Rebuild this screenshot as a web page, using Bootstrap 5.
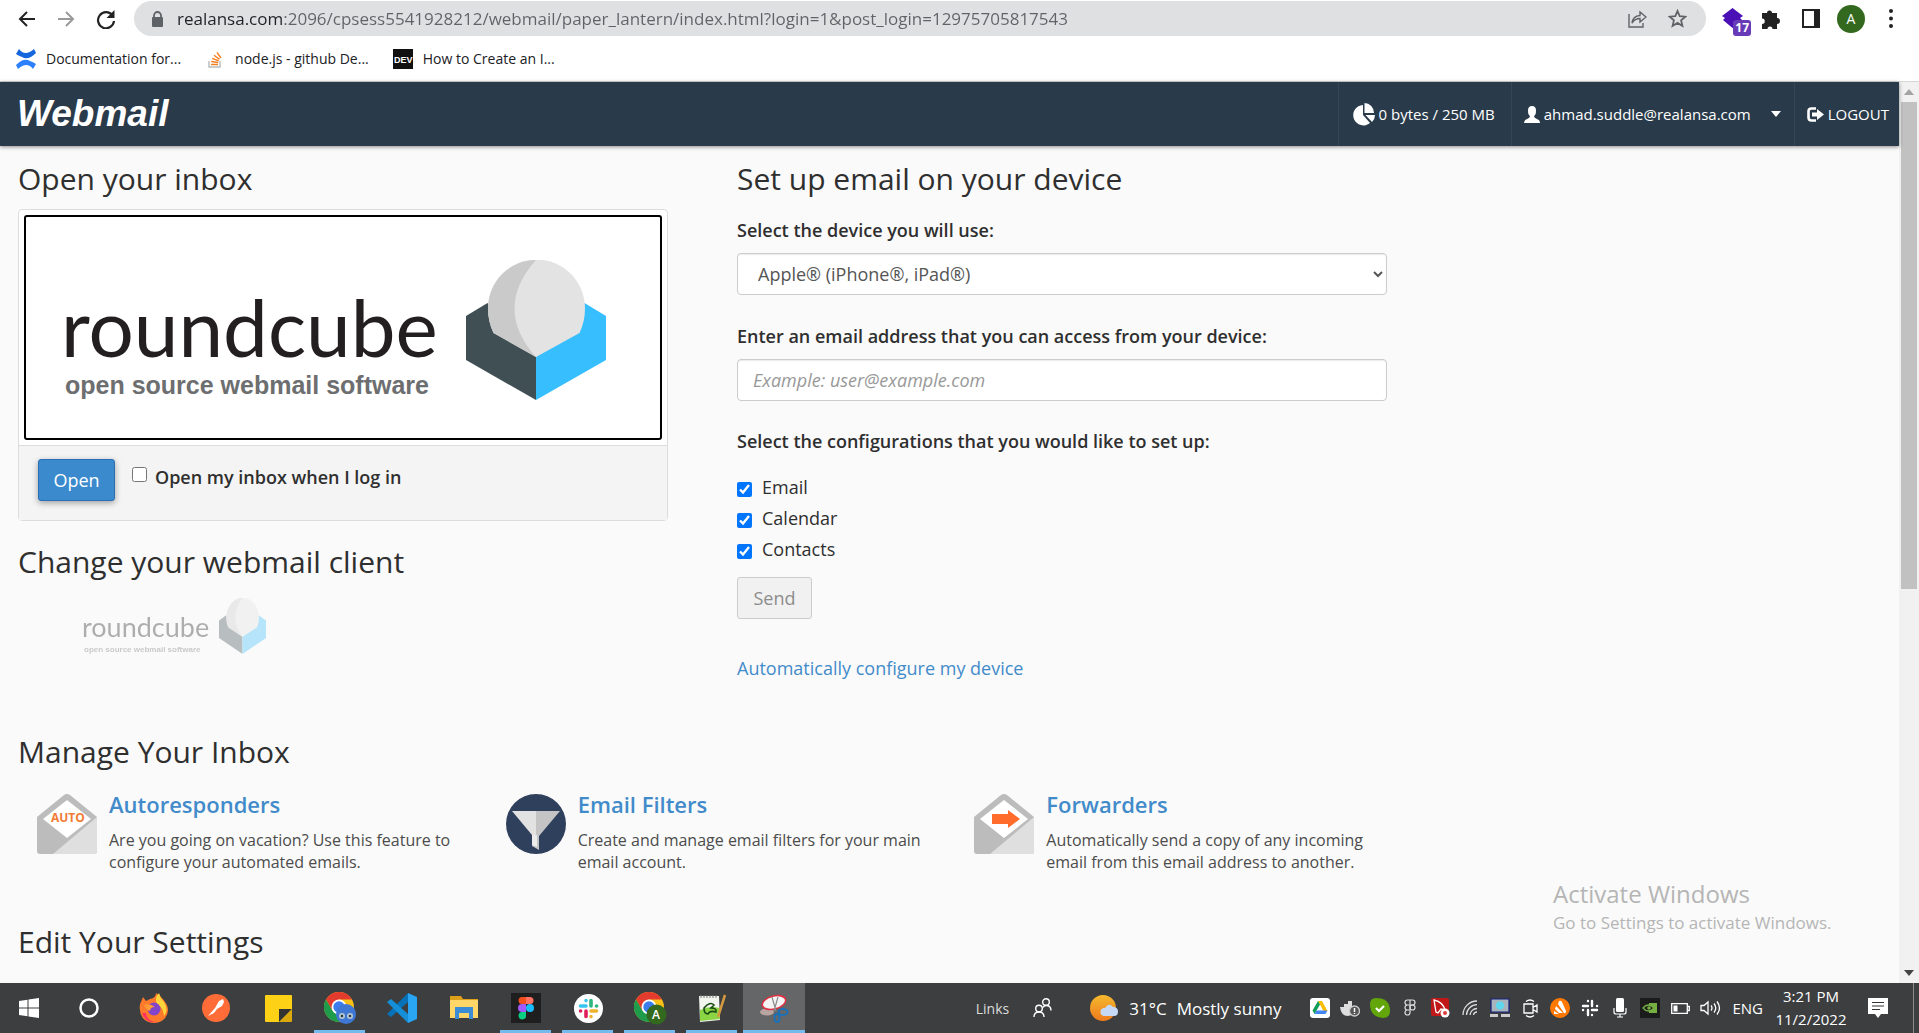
<!DOCTYPE html>
<html lang="en">
<head>
<meta charset="utf-8">
<meta name="viewport" content="width=device-width, initial-scale=1">
<title>Webmail</title>
<link href="https://cdn.jsdelivr.net/npm/bootstrap@5.3.0/dist/css/bootstrap.min.css" rel="stylesheet">
<style>
  body { font-family: "Open Sans", "Noto Sans", sans-serif; font-size: 18px; line-height: 27px; color: #2f2f2f; background: #fff; }
  svg { display: block; flex: none; }
  .toolbar { height: 36px; padding: 1px 8px 0 16px; }
  .tool-btn { border: 0; background: none; padding: 0; display: flex; align-items: center; justify-content: center; width: 40px; height: 35px; flex: none; }
  .tool-btn.slim { width: 22px; }
  .tool-btn.ext { width: 37px; }
  .omnibox { background: #dfe0e2; height: 35px; border-radius: 18px; margin-left: 8px; padding: 0 9px 0 18px; }
  /* host part of the address is darker than the rest */
  .omnibox input { border: 0; outline: 0; font-size: 17px; padding: 0; margin-left: 14px; min-width: 0; color: transparent; background: linear-gradient(to right, #202124 106px, #5f6368 106px); -webkit-background-clip: text; background-clip: text; }
  .avatar { width: 28px; height: 28px; border-radius: 50%; background: #33691e; color: #fff; font-size: 14px; line-height: 28px; }
  .ext-count { right: 0; bottom: 0; background: #673ab7; color: #fff; font-size: 12px; font-weight: 700; line-height: 16px; padding: 0 2px; border-radius: 3px; }
  .bookmarks { height: 45px; padding: 0 16px; font-size: 14px; gap: 24px; }
  .bookmarks a { color: #202124; text-decoration: none; gap: 10px; }
  .viewport-area { border-top: 1px solid #d5d6d8; min-height: 0; }
  .page-col { min-width: 0; }
  .mail-head { background: #293a4a; height: 64px; flex: none; padding-left: 17px; box-shadow: 0 1px 4px rgba(0,0,0,.45); position: relative; }
  .brand-name { font: italic 700 37px "Liberation Sans", sans-serif; color: #fff; text-decoration: none; }
  .head-item { height: 64px; border: solid #32475a; border-width: 0 0 0 1px; color: #fff; font-size: 15px; text-decoration: none; background: none; gap: 4px; white-space: nowrap; padding: 0 16px 0 14px; }
  .head-item.user { padding: 0 13px 0 12px; }
  .head-item.leave { padding: 0 10px 0 12px; }
  .mail-body { background: #fafafa; overflow: hidden; padding: 15px 18px 0; }
  .section-title { font-size: 30px; line-height: 36px; font-weight: 400; margin: 0; }
  .section-title.form-title { margin-bottom: 20px; }
  .section-title.group-title { margin-top: 52px; }
  .setup-grid { display: grid; grid-template-columns: 1fr 1fr; column-gap: 69px; max-width: 1369px; }
  .client-panel { margin-top: 12px; border: 1px solid #ddd; border-radius: 4px; background: #fff; margin-bottom: 23px; }
  .client-frame { display: block; margin: 5px 5px 5px; border: 2px solid #000; border-radius: 3px; }
  .client-frame svg { width: 100%; height: auto; }
  .panel-foot { background: #f4f4f4; border-top: 1px solid #ddd; height: 75px; padding: 13px 19px; }
  .open-btn { width: 77px; height: 42px; background: #3a8acd; border: 1px solid #2b6fb4; border-radius: 3px; color: #fff; padding: 0; font-size: 18px; box-shadow: 0 2px 6px rgba(0,0,0,.35); }
  .auto-open { padding-left: 17px; }
  .auto-open label { padding-top: 5px; }
  .tick { width: 15px; height: 15px; margin: 0; flex: none; accent-color: #0075ff; }
  .small-logo { margin: 3px 0 0 52px; opacity: .35; display: block; width: 216px; }
  .field-label { font-weight: 600; display: block; margin-bottom: 9px; }
  .field-box { display: block; width: 100%; height: 42px; border: 1px solid #ccc; border-radius: 4px; background: #fff; color: #555; font-size: 18px; box-shadow: inset 0 1px 1px rgba(0,0,0,.08); margin-bottom: 28px; padding: 0 15px; }
  select.field-box { padding: 0 2px 0 16px; }
  .field-box::placeholder { color: #999; font-style: italic; opacity: 1; }
  .config-title { margin-bottom: 17px; }
  input.field-box { margin-bottom: 27px; }
  .config-row { height: 31px; gap: 10px; }
  .config-row .tick { margin-top: 4px; }
  .send-btn { height: 42px; width: 75px; margin-top: 12px; border: 1px solid #ccc; border-radius: 3px; background: #f1f1f1; color: #8c8c8c; padding: 0; font-size: 18px; }
  .mail-body a.plain { color: #428bca; text-decoration: none; }
  .auto-link { display: block; margin-top: 36px; }
  .tiles { max-width: 1406px; margin-bottom: 51px; }
  .tile { padding: 21px 20px 0 19px; gap: 12px; }
  .tile > svg { margin-top: 3px; }
  .tile h3 { font-size: 22px; line-height: 27px; font-weight: 600; margin: 0 0 11px; }
  .tile p { font-size: 16px; line-height: 22px; margin: 0; color: #4c4c4c; }
  .scroller { width: 20px; background: #f1f1f1; flex: none; padding: 0 2px; }
  .thumb { background: #c1c1c1; height: 487px; }
  .arrow-cell { height: 20px; display: flex; align-items: center; justify-content: center; flex: none; }
  .activate { right: 60px; bottom: 46px; color: #b5b5b5; font-size: 17px; line-height: 28px; width: 306px; pointer-events: none; white-space: nowrap; }
  .activate strong { font-weight: 400; font-size: 24px; line-height: 31px; display: block; }
  .taskbar { height: 50px; background: #3c3e40; color: #fff; flex: none; font-family: "Open Sans", sans-serif; font-size: 15px; }
  .task { width: 62px; height: 50px; border: 0; background: none; padding: 0; display: flex; align-items: center; justify-content: center; position: relative; flex: none; }
  .task.start { width: 58px; }
  .task.search { margin-right: 3px; }
  .task.notes { width: 50px; margin-right: 10px; }
  .task.opened::after { content: ""; position: absolute; left: 5px; right: 6px; bottom: 0; height: 3px; background: #76b9ed; }
  .task.current { background: #656668; }
  .task.current::after { left: 0; right: 0; }
  .tray { width: 30px; height: 50px; border: 0; background: none; padding: 0; display: flex; align-items: center; justify-content: center; flex: none; }
  .links-label { font-size: 14px; color: #dcdcdc; }
  .people { margin-right: 38px; }
  .weather { font-size: 17px; gap: 10px; margin-right: 24px; }
  .lang { margin: 0 6px 0 7px; }
  .clock { line-height: 23px; width: 84px; }
  .desk-edge { border-left: 1px solid #8a8b8c; width: 6px; }
</style>
</head>
<body class="vh-100 overflow-hidden d-flex flex-column">

<svg class="d-none" aria-hidden="true">
  <symbol id="cube" viewBox="0 0 140 140" preserveAspectRatio="none">
    <path d="M0 56 21.500 43l48.500 54v43L0 100z" fill="#404f54"/>
    <path d="M140 56 118.500 43 70 97v43l70-40z" fill="#37beff"/>
    <path d="M22 48.500a48 48.500 0 0 1 97 0q0 13-5.500 24.500L70 97 27.500 73Q22 61.500 22 48.500z" fill="#e3e3e3"/>
    <path d="M70 0a48 48.500 0 0 0-48 48.500q0 13 5.500 24.500L70 97Q48.500 73 48.500 48.500T70 0z" fill="#cacaca"/>
  </symbol>
  <symbol id="env" viewBox="0 0 60 60">
    <path d="M0 23 27 1q3-2 6 0l27 22v34q0 3-3 3H3q-3 0-3-3z" fill="#bcbcbc"/>
    <path d="M60 23 16 60h41q3 0 3-3z" fill="#dfdfdf"/>
    <path d="M6 25 30 6l24 19-24 19z" fill="#fff"/>
  </symbol>
  <symbol id="chrome" viewBox="0 0 30 30">
    <circle cx="15" cy="15" r="15" fill="#fbc116"/>
    <path d="M2 7.500A15 15 0 0 1 28 7.500H15L8.500 18.700z" fill="#e33b2e"/>
    <path d="M2 7.500A15 15 0 0 0 15 30l6.500-11.200H8.500z" fill="#1e9b4b"/>
    <circle cx="15" cy="15" r="7.500" fill="#fff"/><circle cx="15" cy="15" r="5.700" fill="#3b7ded"/>
  </symbol>
</svg>

<header class="bg-white">
  <div class="toolbar d-flex align-items-center">
    <button class="tool-btn slim" aria-label="Back"><svg width="18" height="18" viewBox="0 0 18 18" fill="none" stroke="#222" stroke-width="2"><path d="M17 9H2M9 2 2 9l7 7"/></svg></button>
    <button class="tool-btn ms-2" aria-label="Forward"><svg width="18" height="18" viewBox="0 0 18 18" fill="none" stroke="#9a9a9a" stroke-width="2"><path d="M1 9h15M9 2l7 7-7 7"/></svg></button>
    <button class="tool-btn" aria-label="Reload"><svg width="20" height="20" viewBox="0 0 20 20"><path d="M16.500 6.500A8 8 0 1 0 18 12" fill="none" stroke="#222" stroke-width="2.200"/><path d="M18.500 1v8h-8z" fill="#222"/></svg></button>
    <div class="omnibox flex-grow-1 d-flex align-items-center">
      <svg width="11" height="16" viewBox="0 0 11 16"><path d="M2 7V4.500a3.500 3.500 0 0 1 7 0V7" fill="none" stroke="#5f6368" stroke-width="1.800"/><rect y="6" width="11" height="10" rx="1" fill="#5f6368"/></svg>
      <input class="flex-grow-1" type="text" aria-label="Address" value="realansa.com:2096/cpsess5541928212/webmail/paper_lantern/index.html?login=1&amp;post_login=12975705817543">
      <button class="tool-btn" aria-label="Share"><svg width="19" height="19" viewBox="0 0 19 19" fill="none" stroke="#5f6368" stroke-width="1.400"><path d="M1 5v13h14v-4"/><path d="M4 14q1-7 8-7.500V3l6 5-6 5V9.500Q7 9.500 4 14z"/></svg></button>
      <button class="tool-btn" aria-label="Bookmark"><svg width="19" height="19" viewBox="0 0 19 19" fill="none" stroke="#5f6368" stroke-width="1.800"><path d="m9.500 2 2.200 5.200 5.600.5-4.200 3.700 1.300 5.500-4.900-3-4.900 3 1.300-5.500-4.200-3.700 5.600-.5z"/></svg></button>
    </div>
    <button class="tool-btn ext position-relative ms-2" aria-label="Extension"><svg width="21" height="22" viewBox="0 0 21 22"><path d="M10.500 0 21 8l-3 2 2 2-9.500 8L1 12l2-2-3-2z" fill="#4a10b5"/></svg><span class="ext-count position-absolute">17</span></button>
    <button class="tool-btn" aria-label="Extensions"><svg width="18" height="20" viewBox="0 0 18 20"><path d="M0 4h5a2.500 2.500 0 0 1 5 0h5v5a2.500 2.500 0 0 1 0 6v5h-4.500a2.500 2.500 0 0 0-5 0H0v-5a2.700 2.700 0 0 0 0-5.500z" fill="#222"/></svg></button>
    <button class="tool-btn" aria-label="Side panel"><svg width="18" height="19" viewBox="0 0 18 19"><rect x="1" y="1" width="16" height="17" fill="none" stroke="#222" stroke-width="2"/><path d="M12 1h5v17h-5z" fill="#222"/></svg></button>
    <button class="tool-btn" aria-label="Profile"><span class="avatar">A</span></button>
    <button class="tool-btn" aria-label="Menu"><svg width="4" height="19" viewBox="0 0 4 19" fill="#222"><circle cx="2" cy="2" r="2"/><circle cx="2" cy="9.500" r="2"/><circle cx="2" cy="17" r="2"/></svg></button>
  </div>
  <nav class="bookmarks d-flex align-items-center" aria-label="Bookmarks">
    <a href="#" class="d-flex align-items-center"><svg width="20" height="20" viewBox="0 0 20 20"><path d="M3 0q6 8 15 0l2 4Q12 12 6 8 3 7 0 5z" fill="#1566dd"/><path d="M17 20q-6-8-15 0l-2-4q8-8 14-4 3 1 6 3z" fill="#2c80fb"/></svg>Documentation for...</a>
    <a href="#" class="d-flex align-items-center"><svg width="20" height="20" viewBox="0 0 20 20" fill="none" stroke="#f48024" stroke-width="1.400"><path d="M4 12v6h11v-6" stroke="#bcbbbb"/><path d="M6 15.500h7M6.200 12.500l7 1M7.200 9.300l6.500 2.500M9 6.200l5.500 4.200M12 3.500l4 5.500"/></svg>node.js - github De...</a>
    <a href="#" class="d-flex align-items-center"><svg width="20" height="20" viewBox="0 0 20 20"><path d="M0 0h20v20H0z" fill="#111"/><text x="1" y="14" font-family="Liberation Sans" font-size="9" font-weight="700" fill="#fff">DEV</text></svg>How to Create an I...</a>
  </nav>
</header>

<div class="viewport-area d-flex flex-grow-1 position-relative">
  <div class="page-col flex-grow-1 d-flex flex-column">
    <div class="mail-head d-flex align-items-center">
      <a class="brand-name me-auto" href="#">Webmail</a>
      <span class="head-item d-flex align-items-center"><svg width="22" height="23" viewBox="0 0 22 23" fill="#fff"><path d="M10 2v10l7 8A10.200 10.200 0 1 1 10 2z"/><path d="M11.500 0A10 10 0 0 1 21 10h-9.500zM12.500 12H22q0 4-3 7z"/></svg>0 bytes / 250 MB</span>
      <button class="head-item user d-flex align-items-center"><svg width="16" height="17" viewBox="0 0 16 17" fill="#fff"><path d="M8 0q4 0 4 4.500Q12 9 10 10q0 2 3 3t3 4H0q0-3 3-4t3-3Q4 9 4 4.500 4 0 8 0z"/></svg>ahmad.suddle@realansa.com<svg class="ms-3" width="10" height="6" viewBox="0 0 10 6"><path d="M0 0h10L5 6z" fill="#fff"/></svg></button>
      <a class="head-item leave d-flex align-items-center" href="#"><svg width="17" height="15" viewBox="0 0 17 15"><path d="M9 1.500H4.500Q1.500 1.500 1.500 4.500v6q0 3 3 3H9" fill="none" stroke="#fff" stroke-width="2.600"/><path d="M5 5.500h5V2l7 5.500-7 5.500V9.500H5z" fill="#fff"/></svg>LOGOUT</a>
    </div>
    <main class="mail-body flex-grow-1">
      <div class="setup-grid">
        <section>
          <h2 class="section-title">Open your inbox</h2>
          <div class="client-panel">
            <a class="client-frame" href="#" aria-label="Roundcube">
              <svg viewBox="0 0 634 221">
                <text x="35" y="140" font-family="Lato" font-size="80" fill="#231f20">roundcube</text>
                <text x="39" y="177" font-family="Liberation Sans" font-weight="700" font-size="25" fill="#6d6e70">open source webmail software</text>
                <use href="#cube" x="440" y="43" width="140" height="140"/>
              </svg>
            </a>
            <div class="panel-foot d-flex">
              <button class="open-btn">Open</button>
              <div class="auto-open d-flex">
                <input class="tick mt-2" type="checkbox" id="auto"><label class="fw-semibold ms-2" for="auto">Open my inbox when I log in</label>
              </div>
            </div>
          </div>
          <h2 class="section-title">Change your webmail client</h2>
          <a class="small-logo" href="#" aria-label="Roundcube">
            <svg width="216" height="76">
              <text x="12" y="54" font-family="Lato" font-size="27" fill="#231f20">roundcube</text>
              <text x="14" y="69" font-family="Liberation Sans" font-weight="700" font-size="8" fill="#6d6e70">open source webmail software</text>
              <use href="#cube" x="149" y="15" width="47" height="56"/>
            </svg>
          </a>
        </section>
        <section>
          <h2 class="section-title form-title">Set up email on your device</h2>
          <label class="field-label" for="device">Select the device you will use:</label>
          <select class="field-box" id="device"><option>Apple® (iPhone®, iPad®)</option></select>
          <label class="field-label" for="addr">Enter an email address that you can access from your device:</label>
          <input class="field-box" id="addr" type="email" placeholder="Example: user@example.com">
          <div class="config-title fw-semibold">Select the configurations that you would like to set up:</div>
          <div class="config-row d-flex align-items-center"><input class="tick" type="checkbox" id="c1" checked><label for="c1">Email</label></div>
          <div class="config-row d-flex align-items-center"><input class="tick" type="checkbox" id="c2" checked><label for="c2">Calendar</label></div>
          <div class="config-row d-flex align-items-center"><input class="tick" type="checkbox" id="c3" checked><label for="c3">Contacts</label></div>
          <button class="send-btn" disabled>Send</button>
          <a class="plain auto-link" href="#">Automatically configure my device</a>
        </section>
      </div>
      <h2 class="section-title group-title">Manage Your Inbox</h2>
      <div class="tiles row row-cols-3 g-0">
        <div class="tile d-flex"><svg width="60" height="60"><use href="#env"/><text x="14" y="28" font-family="Open Sans" font-size="12" font-weight="700" fill="#f27b35">AUTO</text></svg><div><h3><a class="plain" href="#">Autoresponders</a></h3><p>Are you going on vacation? Use this feature to configure your automated emails.</p></div></div>
        <div class="tile d-flex"><svg width="60" height="60" viewBox="0 0 60 60"><circle cx="30" cy="30" r="30" fill="#2f405c"/><path d="M6 17h24v27l-4-3z" fill="#e2e2e2"/><path d="M30 17h24L33 42v14l-7-4V41h4z" fill="#c4c4c4"/><path d="M26 41h5v12l-5-2z" fill="#ececec"/></svg><div><h3><a class="plain" href="#">Email Filters</a></h3><p>Create and manage email filters for your main email account.</p></div></div>
        <div class="tile d-flex"><svg width="60" height="60"><use href="#env"/><path d="M18 20h16v-4l12 9-12 9v-4H18z" fill="#ff6c2c"/></svg><div><h3><a class="plain" href="#">Forwarders</a></h3><p>Automatically send a copy of any incoming email from this email address to another.</p></div></div>
      </div>
      <h2 class="section-title">Edit Your Settings</h2>
    </main>
  </div>
  <div class="scroller d-flex flex-column">
    <div class="arrow-cell"><svg width="10" height="6" viewBox="0 0 10 6"><path d="M0 6h10L5 0z" fill="#a3a3a3"/></svg></div>
    <div class="thumb"></div>
    <div class="arrow-cell mt-auto"><svg width="10" height="6" viewBox="0 0 10 6"><path d="M0 0h10L5 6z" fill="#444"/></svg></div>
  </div>
  <div class="activate position-absolute"><strong>Activate Windows</strong>Go to Settings to activate Windows.</div>
</div>

<footer class="taskbar d-flex align-items-center">
  <button class="task start" aria-label="Start"><svg width="20" height="20" viewBox="0 0 20 20" fill="#fff"><path d="M0 3l8.500-1.200v7.700H0zM9.500 1.600 20 0v9.500H9.500zM0 10.500h8.500v7.700L0 17zM9.500 10.500H20V20L9.500 18.400z"/></svg></button>
  <button class="task search" aria-label="Cortana"><svg width="20" height="20" viewBox="0 0 20 20"><circle cx="10" cy="10" r="8.500" fill="none" stroke="#fff" stroke-width="2.500"/></svg></button>
  <button class="task" aria-label="Firefox"><svg width="30" height="30" viewBox="0 0 30 30"><path d="M2 9l2-5 3 4 4-2q6-1 6-6l5 4q7 7 7 13a14 13 0 0 1-28 0q-1-5 1-8z" fill="#ff7a2a"/><path d="M20 0q1 5 5 9 5 8 0 14-1-9-7-12-3-6 2-11z" fill="#ffd43b"/><path d="M3 20q4 11 16 9-11 0-12-9z" fill="#ff3263"/><circle cx="15" cy="16" r="6.500" fill="#8244c9"/><path d="M5 12q6-2 11 2-5 0-5 4-4-1-6-6z" fill="#ff9a36"/></svg></button>
  <button class="task" aria-label="Postman"><svg width="28" height="28" viewBox="0 0 28 28"><circle cx="14" cy="14" r="14" fill="#ff6c37"/><path d="m6 22 7-8 4-7 4-2 1 3-2 4-5 3-3 4z" fill="#fff"/></svg></button>
  <button class="task" aria-label="Sticky Notes"><svg width="27" height="27" viewBox="0 0 27 27"><path d="M0 1q0-1 1-1h25q1 0 1 1v13L14 27H1q-1 0-1-1z" fill="#fcd116"/><path d="M14 14h13L14 27z" fill="#333"/><path d="M27 14v12q0 1-1 1H14z" fill="#dca90c"/></svg></button>
  <button class="task opened" aria-label="Chrome"><svg width="33" height="33" viewBox="0 0 33 33"><use href="#chrome" width="30" height="30"/><circle cx="22" cy="22" r="10" fill="#3f78d4"/><circle cx="18" cy="24" r="3" fill="#b6c4d2"/><circle cx="26" cy="24" r="3" fill="#b6c4d2"/><circle cx="18" cy="24" r="1.200" fill="#233"/><circle cx="26" cy="24" r="1.200" fill="#233"/></svg></button>
  <button class="task" aria-label="Visual Studio Code"><svg width="30" height="30" viewBox="0 0 30 30"><path d="M21 0 30 4v22l-9 4z" fill="#2aa5f4"/><path d="M21 0v9L4 24l-4-3z" fill="#0872b9"/><path d="M21 30v-9L4 6 0 9z" fill="#1590d8"/></svg></button>
  <button class="task" aria-label="File Explorer"><svg width="28" height="26" viewBox="0 0 28 26"><path d="M0 1h11l2 3h15v5H0z" fill="#dfa019"/><path d="M0 5h28v18H0z" fill="#ffd667"/><path d="M5 12h18v12h-4v-6H9v6H5z" fill="#3b8bd6"/></svg></button>
  <button class="task opened" aria-label="Figma"><svg width="30" height="30" viewBox="0 0 30 30"><path d="M0 0h30v30H0z" fill="#1e1e1e"/><path d="M15 4v7h-4a3.500 3.500 0 0 1 0-7z" fill="#f24e1e"/><path d="M15 4h4a3.500 3.500 0 0 1 0 7h-4z" fill="#ff7262"/><path d="M15 11v8h-4a4 4 0 0 1 0-8z" fill="#a259ff"/><circle cx="19" cy="15" r="4" fill="#1abcfe"/><path d="M15 19v3.500a3.700 3.700 0 1 1-4-3.500z" fill="#0acf83"/></svg></button>
  <button class="task opened" aria-label="Slack"><svg width="29" height="29" viewBox="0 0 29 29"><circle cx="14.500" cy="14.500" r="14.500" fill="#fff"/><g fill="none" stroke-width="3.600" stroke-linecap="round"><path d="M12 6.500v.1M6.500 12H12" stroke="#36c5f0"/><path d="M17 6.500V12M22.500 12h.1" stroke="#2eb67d"/><path d="M17 17h5.500M17 22.500v.1" stroke="#ecb22e"/><path d="M12 17v5.500M6.500 17h.1" stroke="#e01e5a"/></g></svg></button>
  <button class="task opened" aria-label="Chrome profile A"><svg width="33" height="33" viewBox="0 0 33 33"><use href="#chrome" width="30" height="30"/><circle cx="22.500" cy="22.500" r="10" fill="#33691e"/><text x="18" y="27" font-family="Open Sans" font-weight="600" font-size="12" fill="#fff">A</text></svg></button>
  <button class="task opened" aria-label="Notepad++"><svg width="28" height="28" viewBox="0 0 28 28"><path d="M1 2h20l1 24-20 2z" fill="#f1f5ee"/><path d="M2 16q10-5 19-2l1 11-20 2z" fill="#8bd544"/><path d="M3 1v3m3-3v3m3-3v3m3-3v3m3-3v3m3-3v3" stroke="#777"/><path d="M6 14q6-7 10-3l-3 3q6 0 5 4-6-2-8 2-4 0-4-6z" fill="none" stroke="#1c4a15" stroke-width="1.600"/><path d="M27 1 20 23" stroke="#d59a3f" stroke-width="2.500"/></svg></button>
  <button class="task opened current" aria-label="Snipping Tool"><svg width="29" height="29" viewBox="0 0 29 29"><ellipse cx="7" cy="18" rx="7" ry="3.500" fill="#b9a5a2"/><ellipse cx="14" cy="8.500" rx="12" ry="6.500" transform="rotate(-15 14 8.500)" fill="#f4f4f4" stroke="#dc3042" stroke-width="1.600"/><path d="m12 3 4 14M18 3l-4 14" stroke="#8b8b8b" stroke-width="1.200"/><g fill="none" stroke="#1b71b9" stroke-width="2"><ellipse cx="23" cy="18" rx="4.500" ry="3"/><ellipse cx="17" cy="24" rx="2.500" ry="4"/></g></svg></button>

  <div class="d-flex align-items-center ms-auto">
    <span class="links-label me-4">Links</span>
    <svg class="people" width="19" height="20" viewBox="0 0 19 20" fill="none" stroke="#fff" stroke-width="1.400"><circle cx="13" cy="4" r="3.300"/><circle cx="6" cy="10.500" r="3.300"/><path d="M1 19q0-5 5-5t5 5M10 9.500q1-2 3-2 5 0 5 5"/></svg>
    <div class="weather d-flex align-items-center"><svg width="29" height="27" viewBox="0 0 29 27"><defs><linearGradient id="sun" x2="0" y2="1"><stop stop-color="#f5b92d"/><stop offset="1" stop-color="#ee7a1e"/></linearGradient></defs><circle cx="13" cy="13" r="13" fill="url(#sun)"/><path d="M14 21a4 4 0 0 1 1-8q4-6 8-1 5 0 5 4.500T24 21z" fill="#c5d9f7"/></svg><span>31°C</span><span>Mostly sunny</span></div>
    <button class="tray" aria-label="Drive"><svg width="20" height="20" viewBox="0 0 20 20"><rect width="20" height="20" rx="3" fill="#fff"/><path d="M8 3h4l5.500 10h-4z" fill="#fbbc04"/><path d="M8 3 2.500 12.500l2 3.500L10 6.500z" fill="#0f9d58"/><path d="M4.500 16h11l2-3.500h-11z" fill="#4285f4"/></svg></button>
    <button class="tray" aria-label="Docker"><svg width="20" height="17" viewBox="0 0 20 17"><path d="M0 7h4V4h4V1h4v6h5q-1 8-9 9-7 0-8-9z" fill="#ddd"/><circle cx="14.500" cy="11" r="5" fill="#555" stroke="#ccc" stroke-width="1.300"/><path d="M14.500 8v4m0 1v1" stroke="#fff" stroke-width="1.500"/></svg></button>
    <button class="tray" aria-label="Status"><svg width="20" height="20" viewBox="0 0 20 20"><path d="M0 6q0-6 6-6 14 0 14 13 0 7-7 7Q0 19 0 6z" fill="#62a60a"/><path d="m6 10 3 3 5-5" fill="none" stroke="#fff" stroke-width="2.200"/></svg></button>
    <button class="tray" aria-label="Figma agent"><svg width="12" height="18" viewBox="0 0 12 18" fill="none" stroke="#ddd" stroke-width="1.200"><path d="M6 1H3.500a2.500 2.500 0 0 0 0 5H6zm0 0h2.500a2.500 2.500 0 0 1 0 5H6M6 6H3.500a2.500 2.500 0 0 0 0 5H6zM3.500 11A2.500 2.500 0 1 0 6 13.500V11z"/><circle cx="8.500" cy="8.500" r="2.500"/></svg></button>
    <button class="tray" aria-label="Pointer"><svg width="19" height="20" viewBox="0 0 19 20"><rect width="18" height="18" rx="2" fill="#c01818"/><path d="M3 2q9 2 11 10l-4-1-3 4-2-1z" fill="none" stroke="#fff" stroke-width="1.300"/><circle cx="14" cy="15" r="4.500" fill="#fff"/><circle cx="14" cy="15" r="2" fill="#e23b3b"/></svg></button>
    <button class="tray" aria-label="Network"><svg width="16" height="16" viewBox="0 0 16 16" fill="none" stroke="#ddd" stroke-width="1.300"><path d="M1 15A14 14 0 0 1 15 1M4.500 15A10.500 10.500 0 0 1 15 4.700M8 15a7 7 0 0 1 7-6.500M11.500 15a3.500 3.500 0 0 1 3.500-3"/></svg></button>
    <button class="tray" aria-label="Display"><svg width="20" height="20" viewBox="0 0 20 20"><path d="M1 1h18v13H1z" fill="#a9b4bc" stroke="#16207e" stroke-width="1.200"/><circle cx="10" cy="7.500" r="4" fill="#5fd8ef"/><path d="M0 16h8v3H0zM11 16h9v3h-9z" fill="#ccc"/></svg></button>
    <button class="tray" aria-label="Meet now"><svg width="15" height="19" viewBox="0 0 15 19" fill="none" stroke="#fff" stroke-width="1.300"><path d="M1 5h9v9H1zM10 8.500l4-2.500v7l-4-2.500M3 2.500q4-3 8 0M3 16.500q4 3 8 0"/></svg></button>
    <button class="tray" aria-label="Avast"><svg width="20" height="20" viewBox="0 0 20 20"><circle cx="10" cy="10" r="10" fill="#ff7800"/><path d="M9 3q2-1 3 1l4 9q0 3-2 2L8 6zM6 8l7 7H9L5 11zM4 13l5 3H4z" fill="#fff"/></svg></button>
    <button class="tray" aria-label="Slack tray"><svg width="18" height="18" viewBox="0 0 18 18" fill="none" stroke="#fff" stroke-width="2.400" stroke-linecap="round"><path d="M7 2v.1M2 7h5M11 2v5M16 7h.1M11 11h5M11 16v.1M7 11v5M2 11h.1"/></svg></button>
    <button class="tray" aria-label="Microphone"><svg width="14" height="20" viewBox="0 0 14 20"><rect x="3" width="8" height="14" rx="1.500" fill="#fff"/><path d="M1 10v4q0 2 2 2h8q2 0 2-2v-4M7 16v3M4 19h6" fill="none" stroke="#fff" stroke-width="1.200"/></svg></button>
    <button class="tray" aria-label="Nvidia"><svg width="20" height="20" viewBox="0 0 20 20"><path d="M0 0h20v20H0z" fill="#1b1b1b"/><path d="M9 5h8v10H9z" fill="#76b043"/><path d="M3 10q5-6 11 0-6 6-11 0z" fill="#1b1b1b" stroke="#76b043" stroke-width="1.300"/><circle cx="9" cy="10" r="1.800" fill="#76b043"/></svg></button>
    <button class="tray" aria-label="Battery"><svg width="19" height="11" viewBox="0 0 19 11"><path d="M.7.700h15.600v9.600H.7zM17 3.500h1.300v4H17" fill="none" stroke="#fff" stroke-width="1.300"/><path d="M2.500 2.500h4v6h-4z" fill="#fff"/></svg></button>
    <button class="tray" aria-label="Volume"><svg width="21" height="16" viewBox="0 0 21 16" fill="none" stroke="#fff" stroke-width="1.300"><path d="M1 5.500h3L8 2v12l-4-3.500H1z"/><path d="M11 5.500q2 2.500 0 5M14 3.500q3.500 4.500 0 9M17 1.500q5 6.500 0 13"/></svg></button>
    <span class="lang">ENG</span>
    <div class="clock text-center">3:21 PM<br>11/2/2022</div>
    <button class="task notes" aria-label="Notifications"><svg width="20" height="20" viewBox="0 0 20 20"><path d="M0 0h20v16h-7l-3 4-3-4H0z" fill="#fff"/><path d="M4 4.500h12M4 8h12M4 11.500h8" stroke="#333" stroke-width="1.200"/></svg></button>
    <span class="desk-edge align-self-stretch"></span>
  </div>
</footer>
<script src="https://cdn.jsdelivr.net/npm/bootstrap@5.3.0/dist/js/bootstrap.bundle.min.js"></script>
</body>
</html>
